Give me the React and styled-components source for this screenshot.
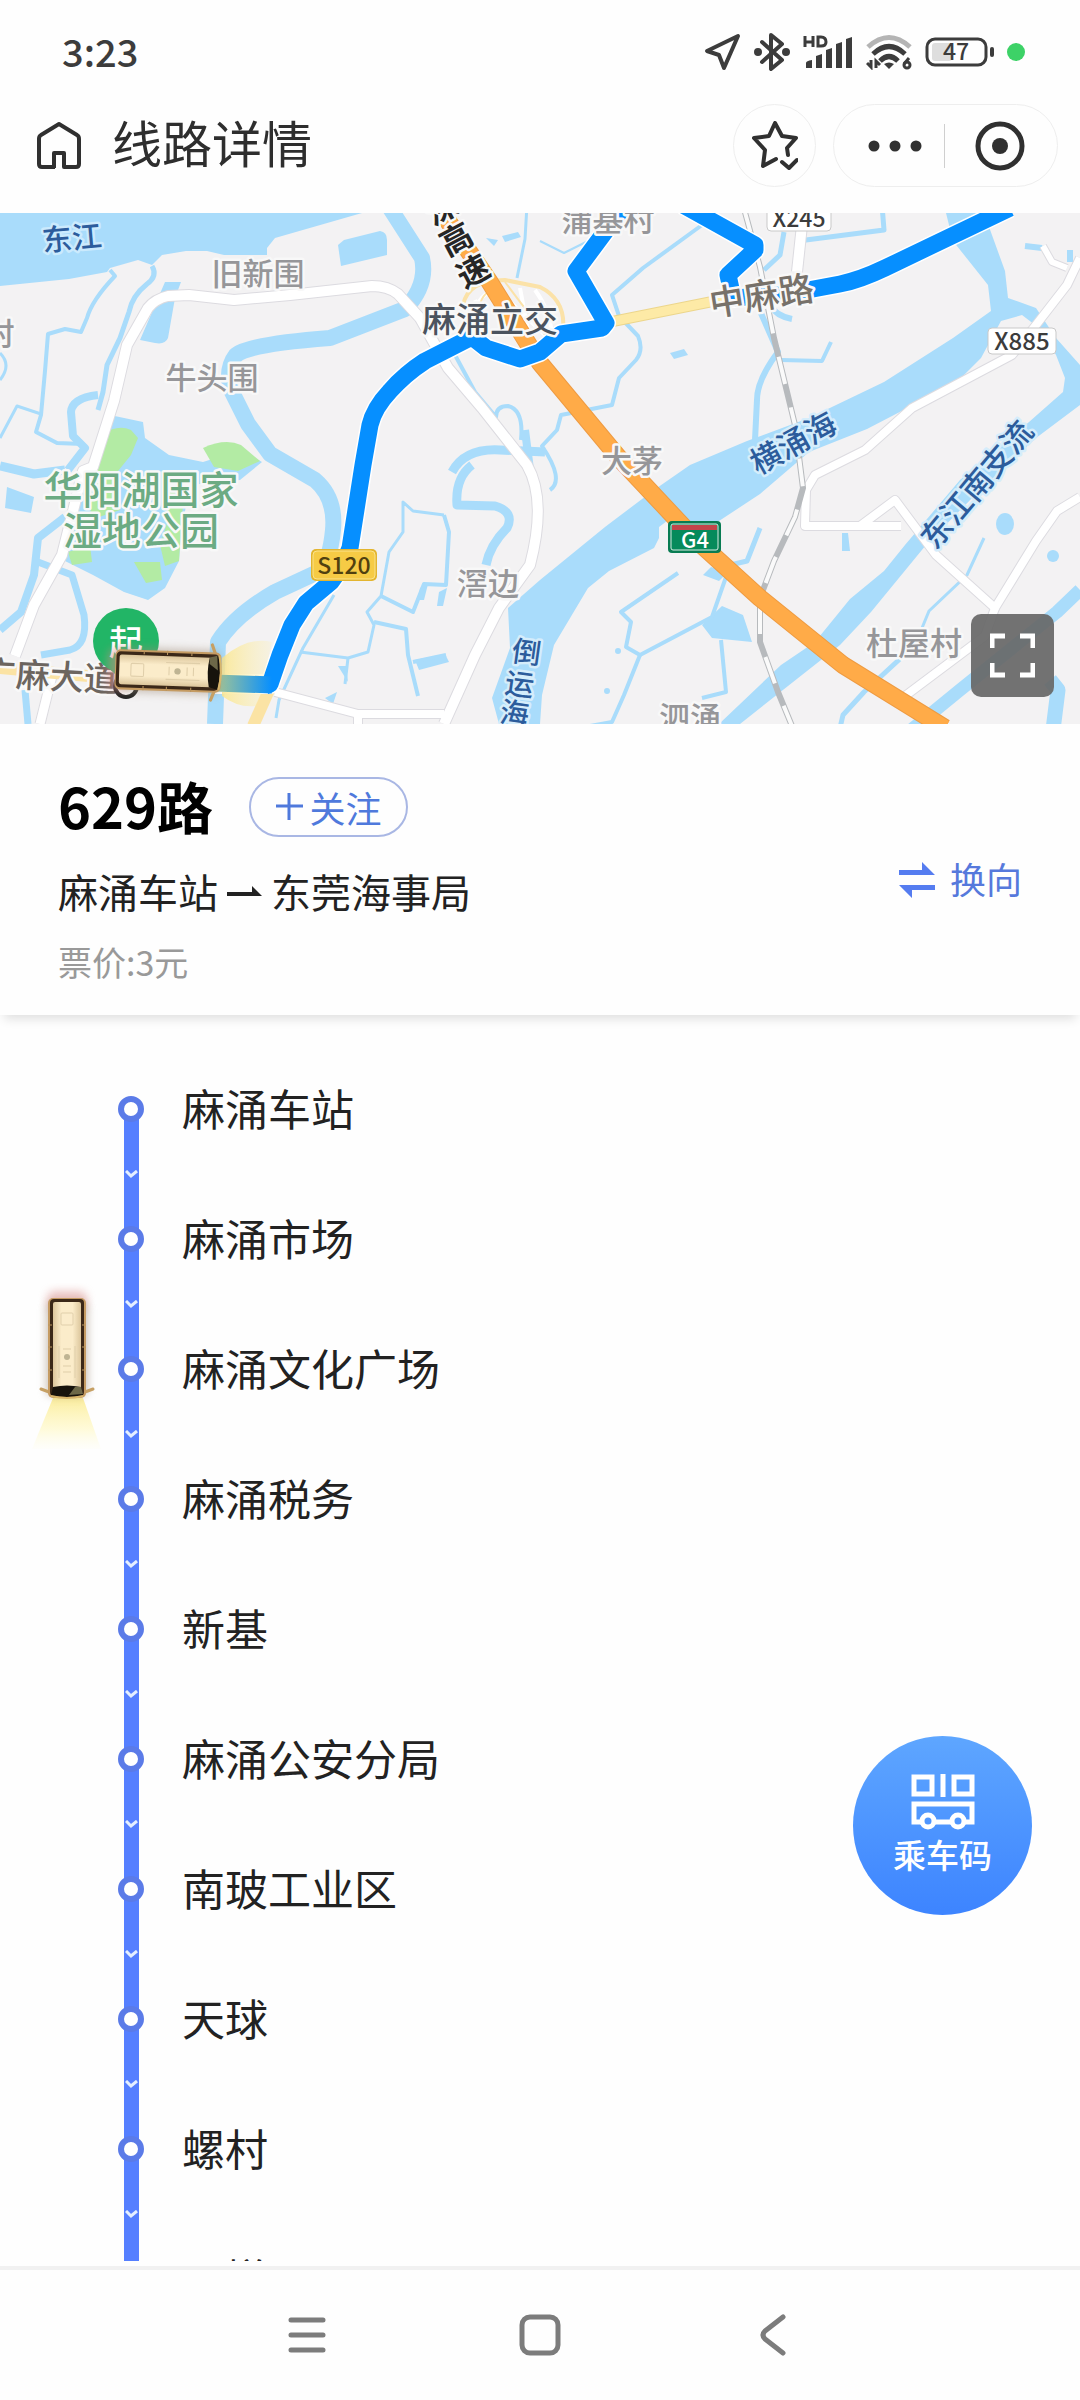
import React, { useState } from "react";
import styled, { createGlobalStyle } from "styled-components";

const GlobalStyle = createGlobalStyle`
  * { box-sizing: border-box; }
  body {
    margin: 0;
    background: #fefefe;
    color: #222;
    font-family: "Noto Sans CJK SC", "Noto Sans", sans-serif;
  }
  button { font-family: inherit; padding: 0; border: 0; background: none; color: inherit; cursor: pointer; }
  svg { display: block; }
`;

const Page = styled.div`
  display: flex;
  flex-direction: column;
  height: 100vh;
  overflow: hidden;
`;

const StatusBar = styled.div`
  display: flex;
  align-items: center;
  justify-content: space-between;
  flex: none;
  height: 104px;
  padding: 0 55px 0 62px;
`;

const Clock = styled.time`
  padding-bottom: 2px;
  font-size: 38px;
  line-height: 40px;
  font-weight: 500;
  color: #3c3c3c;
`;

const StatusIcons = styled.div`
  display: flex;
  align-items: center;
  gap: 13px;
`;

const Header = styled.header`
  display: flex;
  align-items: center;
  flex: none;
  padding: 0 22px 26px 32px;
`;

const HomeButton = styled.button`
  width: 54px;
  height: 54px;
`;

const Title = styled.h1`
  flex: 1;
  margin: 0 0 0 26px;
  padding-bottom: 10px;
  font-size: 50px;
  line-height: 60px;
  font-weight: 400;
  color: #2e2e2e;
`;

const RoundButton = styled.button`
  display: grid;
  place-items: center;
  width: 83px;
  height: 83px;
  margin-right: 17px;
  border: 1px solid #eee;
  border-radius: 50%;
`;

const Capsule = styled.div`
  display: flex;
  align-items: center;
  justify-content: space-between;
  width: 225px;
  height: 83px;
  padding: 0 32px 0 34px;
  border: 1px solid #eee;
  border-radius: 42px;
`;

const CapsuleButton = styled.button`
  display: grid;
  place-items: center;
  height: 100%;
`;

const CapsuleDivider = styled.span`
  width: 1px;
  height: 44px;
  margin-right: 8px;
  background: #cfcfcf;
`;

const MapPanel = styled.section`
  position: relative;
  flex: none;
  height: 511px;
  background: #f3f2f3;
`;

const MapCanvas = styled.svg`
  width: 100%;
  height: 100%;
`;

const MapText = styled.text`
  font-family: "Noto Sans CJK SC", "Noto Sans", sans-serif;
  font-size: ${(p) => p.$size || 31}px;
  font-weight: ${(p) => p.$weight || 500};
  fill: ${(p) => p.$color || "#969699"};
  stroke: ${(p) => p.$halo || "#f8f8f8"};
  stroke-width: ${(p) => (p.$halo === "none" ? 0 : 5)}px;
  stroke-linejoin: round;
  paint-order: stroke;
  text-anchor: middle;
  dominant-baseline: ${(p) => (p.$central ? "central" : "auto")};
`;

const ExpandButton = styled.button`
  position: absolute;
  right: 26px;
  bottom: 27px;
  display: grid;
  place-items: center;
  width: 83px;
  height: 83px;
  border-radius: 10px;
  background: rgba(103, 103, 103, 0.92);
`;

const RouteCard = styled.section`
  display: flex;
  align-items: center;
  justify-content: space-between;
  flex: none;
  height: 291px;
  padding: 50px 58px 30px;
  background: #fefefe;
  box-shadow: 0 8px 10px -4px rgba(0, 0, 0, 0.12);
`;

const RouteInfo = styled.div`
  display: flex;
  flex-direction: column;
`;

const RouteHead = styled.div`
  display: flex;
  align-items: center;
  gap: 36px;
  height: 66px;
`;

const RouteName = styled.h2`
  margin: 0;
  padding-bottom: 4px;
  font-size: 56px;
  line-height: 62px;
  font-weight: 700;
  color: #000;
`;

const FollowButton = styled.button`
  display: flex;
  align-items: center;
  justify-content: center;
  gap: 7px;
  width: 159px;
  height: 60px;
  border: 2px solid #a9b7e4;
  border-radius: 30px;
  font-size: 36px;
  line-height: 40px;
  color: #4f79dc;
`;

const Direction = styled.p`
  display: flex;
  align-items: center;
  gap: 9px;
  margin: 21px 0 0;
  font-size: 40px;
  line-height: 60px;
  color: #222;
`;

const Fare = styled.p`
  margin: 17px 0 0;
  font-size: 34px;
  line-height: 48px;
  color: #999;
`;

const SwapButton = styled.button`
  display: flex;
  align-items: center;
  gap: 15px;
  font-size: 36px;
  line-height: 40px;
  color: #5679dc;
`;

const SwapLabel = styled.span`
  padding-bottom: 4px;
`;

const StopArea = styled.main`
  position: relative;
  flex: 1;
  min-height: 0;
  margin-bottom: 5px;
  overflow: hidden;
`;

const StopList = styled.ol`
  margin: 0;
  padding: 81px 0 0;
  list-style: none;
`;

const Stop = styled.li`
  display: grid;
  grid-template-columns: 26px 1fr;
  column-gap: 38px;
  height: 130px;
  padding-left: 118px;
`;

const Track = styled.div`
  display: flex;
  flex-direction: column;
  align-items: center;
`;

const Dot = styled.span`
  z-index: 1;
  flex: none;
  width: 26px;
  height: 26px;
  border: 6px solid #5b7be8;
  border-radius: 50%;
  background: #fff;
`;

const Segment = styled.span`
  display: grid;
  place-items: center;
  flex: none;
  width: 15px;
  height: 124px;
  margin: -10px 0;
  background: #557fff;
`;

const StopName = styled.span`
  height: 24px;
  font-size: 43px;
  line-height: 22px;
  color: #222;
`;

const BusMarker = styled.svg`
  position: absolute;
  top: 263px;
  left: 27px;
`;

const RideCodeButton = styled.button`
  position: fixed;
  right: 48px;
  bottom: 485px;
  display: flex;
  flex-direction: column;
  align-items: center;
  width: 179px;
  height: 179px;
  padding-top: 38px;
  border-radius: 50%;
  background: linear-gradient(#5ea6ff, #3d84ff);
  color: #fff;
  font-size: 33px;
  line-height: 48px;
  font-weight: 500;
`;

const NavBar = styled.nav`
  display: flex;
  align-items: center;
  justify-content: center;
  gap: 173px;
  flex: none;
  height: 134px;
  border-top: 4px solid #f1f1f1;
`;

const NavButton = styled.button`
  display: grid;
  place-items: center;
  width: 60px;
  height: 60px;
`;

const stops = [
  "麻涌车站",
  "麻涌市场",
  "麻涌文化广场",
  "麻涌税务",
  "新基",
  "麻涌公安分局",
  "南玻工业区",
  "天球",
  "螺村",
  "川槎",
];

/* Top view of the bus, front pointing down, body centred on 0,0. */
function Bus({ beam }) {
  return (
    <g>
      {beam && <path d="M-14 50 L-35 101 L34 101 L16 50 Z" fill="url(#beam)" />}
      <rect x="-20" y="-57" width="40" height="20" rx="8" fill="#d98a86" opacity="0.5" filter="url(#soft)" />
      <rect x="-21" y="-46" width="42" height="94" rx="6" fill="#9d8a76" opacity="0.5" filter="url(#soft)" />
      <path d="M-18 44 L-26 41 M18 44 L26 41" stroke="#c6a064" strokeWidth="3" strokeLinecap="round" />
      <rect x="-19" y="-50" width="38" height="100" rx="5" fill="#c59b62" />
      <rect x="-17" y="-49" width="34" height="97" rx="4" fill="#3b2818" />
      <rect x="-14" y="-46" width="28" height="88" rx="2" fill="url(#roof)" />
      <path d="M-19 -23 H-15 M-19 -1 H-15 M-19 22 H-15 M15 -23 H19 M15 -1 H19 M15 22 H19" stroke="#b8945f" strokeWidth="1" />
      <path d="M-14 39 Q0 36 14 39 L16 47 Q0 51 -16 47 Z" fill="#17130c" />
      <path d="M2 47 L8 39 L14 39 L16 46 Z" fill="#6d6848" />
      <path d="M-16 48 Q0 52 16 48" stroke="#d8b66c" strokeWidth="2" fill="none" />
      <rect x="-6" y="-35" width="12" height="12" rx="1" fill="#fbeccb" stroke="#e0cfab" />
      <path d="M-8 -2 V30 M8 -2 V30 M-4 1 H4 M-4 18 H4 M-4 24 H4" stroke="#dfcea9" fill="none" />
      <circle cx="0" cy="9" r="3" fill="#bfb493" />
    </g>
  );
}

function BusDefs() {
  return (
    <defs>
      <linearGradient id="beam" x1="0" y1="0" x2="0" y2="1">
        <stop offset="0" stopColor="#fbec98" stopOpacity="0.95" />
        <stop offset="0.6" stopColor="#fff8bf" stopOpacity="0.6" />
        <stop offset="1" stopColor="#fffbdc" stopOpacity="0.1" />
      </linearGradient>
      <linearGradient id="roof">
        <stop offset="0" stopColor="#dcc69c" />
        <stop offset="0.3" stopColor="#fbecca" />
        <stop offset="0.7" stopColor="#fbecca" />
        <stop offset="1" stopColor="#dcc69c" />
      </linearGradient>
      <linearGradient id="glow" x1="220" x2="272" y1="0" y2="0" gradientUnits="userSpaceOnUse">
        <stop offset="0" stopColor="#fbe78f" stopOpacity="0.9" />
        <stop offset="1" stopColor="#fdf0b4" stopOpacity="0.25" />
      </linearGradient>
      <linearGradient id="lit" x1="220" x2="272" y1="0" y2="0" gradientUnits="userSpaceOnUse">
        <stop offset="0" stopColor="#9bc29a" />
        <stop offset="1" stopColor="#068fff" />
      </linearGradient>
      <filter id="soft" x="-40%" y="-40%" width="180%" height="180%">
        <feGaussianBlur stdDeviation="4" />
      </filter>
    </defs>
  );
}

const WATER = "#a9dcfb";
const BLUE = "#2c5c9c";

const roads = [
  ["M15 656 L34 605 L62 555 L83 471 L93 467 L114 401 L127 345 L148 308 Q155 299 168 296 L189 295 L234 300 L290 295 L372 286 Q388 286 398 294 L420 318 L448 368 L482 408 L527 465 Q547 500 530 565 L499 608 L475 655 L444 724", 10],
  ["M275 692 L358 714 L444 714 M358 714 V724", 8],
  ["M52 676 L40 724", 9],
  ["M1080 258 L1067 285 L1036 325 L1012 355 L912 408 L865 450 L815 475 L806 490 L805 526 L860 526 L895 500 L936 555 L995 608 L1036 541 L1057 511 L1080 497", 8],
  ["M860 526 L901 526", 8],
  ["M995 608 L985 636 L905 696", 8],
  ["M802 225 L797 272", 10],
  ["M1043 246 L1052 262 L1067 268", 6],
];

const streams = [
  ["M152 266 Q158 276 147 284 Q132 296 129 312 L120 338 L107 365 L103 392 L98 410", 5],
  ["M110 270 L115 276 Q92 300 87 318 L81 332 L65 329 L48 334 L45 371 L41 415 L36 432 L57 443 L83 444", 4],
  ["M388 205 L422 258 Q428 285 405 309 L330 338 Q250 344 236 355 Q226 368 230 388 L248 424 L270 454 L315 480 Q336 498 333 530 Q330 562 318 572 L275 592 Q235 615 218 642 L215 724", 16],
  ["M98 395 Q72 398 71 412 L73 436 L85 448 L68 470", 8],
  ["M0 438 L17 406 L41 414", 3],
  ["M0 466 L34 474 L65 470", 9],
  ["M65 517 L38 538 L34 575 L21 612 L0 630", 8],
  ["M38 562 L72 575 L84 615 Q88 645 70 650 L41 655", 7],
  ["M25 690 L28 724", 7],
  ["M0 353 Q12 365 0 380", 3],
  ["M455 355 L475 392 L496 417 Q496 406 508 406 Q524 410 521 440", 4],
  ["M545 452 L500 450 Q465 448 452 472", 9],
  ["M525 430 L530 470", 8],
  ["M472 465 Q455 478 457 505 L495 506 Q515 512 507 528 Q490 545 486 565", 9],
  ["M444 515 L413 511 L403 502 L403 532 L389 552 L381 596 L367 612 L374 625 L368 652 L348 658 L300 652", 3],
  ["M381 596 L413 612 L424 584 L446 585 L449 532 L444 515", 4],
  ["M374 622 L406 629 L408 655 L418 696 M413 662 L446 655", 4],
  ["M348 658 L345 684 M334 595 L303 648 L279 700 L276 718", 3],
  ["M527 205 L525 239 L517 278", 3],
  ["M540 241 L564 253 L590 240", 2],
  ["M702 225 L643 268 L612 295 L619 316 L638 336 Q644 350 636 360 L619 378 L612 405 L561 415 L557 430 L542 446 Q565 480 550 490", 4],
  ["M784 232 L780 255 L764 270 M798 241 L884 230 L882 205", 5],
  ["M760 311 L778 352 Q757 380 757 400 L755 440 M770 305 Q776 316 792 319", 6],
  ["M781 360 L822 361 L831 342", 4],
  ["M678 573 L621 612 L631 622 L626 647 L640 655 L712 617 L726 577", 4],
  ["M640 655 L624 695 L612 722 L590 726", 4],
  ["M760 528 L747 561 L726 566", 5],
  ["M721 640 L726 692 L702 698", 4],
  ["M984 538 L967 575 L929 611 L922 628", 3],
  ["M915 645 L864 692 L843 715 L840 728", 5],
  ["M905 735 L960 690 L1057 612 L1080 590", 13],
  ["M1050 680 L1058 690 L1053 730", 15],
  ["M1025 246 L1042 248 M1070 250 V262", 6],
];

function RouteMap() {
  return (
    <MapCanvas viewBox="0 213 1080 511" preserveAspectRatio="xMidYMid slice" role="img" aria-label="629路线路地图">
      <BusDefs />
      <rect x="0" y="213" width="1080" height="511" fill="#f3f2f3" />
      <g fill={WATER}>
        <path d="M0 213 H362 L275 238 L267 248 V255 H224 L207 251 H186 L162 255 L152 265 L138 260 L110 268 L107 272 L69 279 L0 286 Z" />
        <path d="M344 240 L380 231 Q387 232 387 240 V255 L341 266 L338 245 Z" />
        <path d="M165 282 L181 282 L175 298 L168 338 Q165 345 155 343 L140 340 Z" />
        <path d="M946 213 L953 241 L988 285 L991 311 L953 338 L884 382 L809 418 L747 441 L690 465 L654 490 L605 527 L540 580 L508 608 L510 648 L492 698 L499 724 H540 L542 695 L554 645 L588 588 L609 571 L654 548 L659 538 V527 L667 521 H719 L760 494 L809 452 L867 429 L919 402 L957 382 L981 358 L1001 321 L1022 315 L1039 328 L1056 355 L1065 378 L1063 392 L1029 422 L960 480 L905 545 L884 571 L850 599 L815 642 L781 665 L719 724 H740 L840 645 L871 612 L926 545 L975 495 L1036 438 L1080 405 V365 L1056 338 L1036 308 L1008 298 L1005 271 L984 213 Z" />
        <path d="M110 415 L143 422 L145 438 L169 455 L203 462 L241 450 L262 462 L240 480 L190 485 L181 532 L179 561 L165 588 L148 600 L124 592 L93 575 L65 561 L85 480 Z" />
        <path d="M7 487 L34 497 L31 513 L5 508 Z M486 238 l12 2 l-4 6 z M502 236 l16 -4 l3 5 l-16 5 z" />
        <path d="M722 606 L743 615 L752 642 L712 638 L702 625 Z M703 575 l8 -8 l16 6 l-8 8 z M670 353 l14 -4 l4 6 l-14 4 z M842 533 h6 l2 18 h-8 z" />
        <path d="M420 588 l8 -4 l-4 16 h-6 z M439 592 l8 -4 l-4 18 h-6 z M415 660 l30 -6 l4 8 l-30 8 z M325 698 l12 -6 l-4 12 z M338 666 h8 l2 16 z" />
        <ellipse cx="1005" cy="524" rx="9" ry="11" />
        <circle cx="1053" cy="556" r="6" />
        <circle cx="618" cy="651" r="3" />
        <circle cx="607" cy="691" r="3" />
      </g>
      <g fill="#b3eba4">
        <path d="M103 434 Q118 424 131 430 L138 438 L131 455 L114 476 L120 510 L90 520 L93 471 Z" />
        <path d="M203 448 Q225 438 241 445 L260 461 L238 471 L214 467 Z" />
        <path d="M165 480 L185 478 L181 530 L179 561 L165 566 L160 545 L168 520 Z" />
        <path d="M68 552 L90 545 L92 562 L72 565 Z M134 562 L160 562 L162 580 L146 583 Z" />
      </g>
      <g fill="none" stroke={WATER} strokeLinejoin="round">
        {streams.map(([d, w]) => (
          <path key={d} d={d} strokeWidth={w} />
        ))}
      </g>
      <g fill="none" strokeLinejoin="round">
        {roads.map(([d, w]) => (
          <path key={d} d={d} stroke="#dcdbe0" strokeWidth={w + 2} />
        ))}
        {roads.map(([d, w]) => (
          <path key={d} d={d} stroke="#fff" strokeWidth={w} />
        ))}
        <g strokeWidth="4">
          <path d="M463 305 Q468 280 505 280 L540 287 Q566 300 563 330" stroke="#fbe2a8" />
          <path d="M472 322 Q478 288 500 292 L550 340 M488 330 L475 300 M520 288 L528 330 M535 290 Q550 310 552 335" stroke="#fff" />
          <path d="M480 338 Q474 302 488 292 M505 282 L545 335" stroke="#fbe2a8" strokeWidth="2" />
        </g>
        <path d="M605 323 L735 297" stroke="#ecd68c" strokeWidth="11" />
        <path d="M605 323 L735 297" stroke="#fdeaa6" strokeWidth="9" />
        <path d="M0 668 L110 678" stroke="#fbe3a4" strokeWidth="12" />
        <path d="M253 726 L269 690" stroke="#fbe3a4" strokeWidth="12" />
        <path d="M743 205 L760 267 L774 338 L795 425 L803 488 L795 517 L774 561 L760 598 V642 L778 692 L792 726" stroke="#b7babd" strokeWidth="6" />
        <path d="M743 205 L760 267 L774 338 L795 425 L803 488 L795 517 L774 561 L760 598 V642 L778 692 L792 726" stroke="#fafafa" strokeWidth="4" strokeDasharray="28 24" />
        <path d="M437 205 L489 281 L540 363 L619 458 L695 539 L760 598 L843 665 L945 728" stroke="#ee9b42" strokeWidth="18" />
        <path d="M437 205 L489 281 L540 363 L619 458 L695 539 L760 598 L843 665 L945 728" stroke="#ffab48" strokeWidth="16" />
        <g>
          <path d="M215 684 H270 L280 655 L292 625 L306 603 L331 582 L343 565 L350 548 L363 465 L370 425 Q374 408 390 391 Q405 374 425 361 L472 337 L486 348 L520 359 L540 352 L561 334 L602 328 L606 323 L576 271 L625 205" stroke="#fff" strokeWidth="20" />
          <path d="M683 205 L755 245 V250 L728 275 L733 298 L781 295 L840 284 Q860 280 885 268 L1010 208" stroke="#fff" strokeWidth="20" />
          <path d="M265 686 L270 684 L280 655 L292 625 L306 603 L331 582 L343 565 L350 548 L363 465 L370 425 Q374 408 390 391 Q405 374 425 361 L472 337 L486 348 L520 359 L540 352 L561 334 L602 328 L606 323 L576 271 L625 205" stroke="#068fff" strokeWidth="17" />
          <path d="M683 205 L755 245 V250 L728 275 L733 298 L781 295 L840 284 Q860 280 885 268 L1010 208" stroke="#068fff" strokeWidth="17" />
          <path d="M222 658 Q248 636 272 642 L264 676 H222 Z M222 692 H262 L256 706 Q238 708 222 696 Z" fill="url(#glow)" />
          <path d="M215 683 L272 685" stroke="url(#lit)" strokeWidth="17" />
        </g>
      </g>

      <MapText x="72" y="249" transform="rotate(-5 72 239)" $color={BLUE} $halo="#cbeafd" $size={30}>东江</MapText>
      <MapText x="258" y="285">旧新围</MapText>
      <MapText x="212" y="389">牛头围</MapText>
      <MapText x="-1" y="345">村</MapText>
      <MapText x="141" y="504" $size={39} $color="#6cab83">华阳湖国家</MapText>
      <MapText x="141" y="545" $size={39} $color="#6cab83">湿地公园</MapText>
      <MapText x="608" y="231">蒲基村</MapText>
      <MapText x="632" y="472">大茅</MapText>
      <MapText x="488" y="595">滘边</MapText>
      <MapText x="914" y="655" $size={32}>杜屋村</MapText>
      <MapText x="690" y="729">泗涌</MapText>
      <MapText x="490" y="332" $size={34} $color="#4b535e">麻涌立交</MapText>
      <MapText x="761" y="293" transform="rotate(-9 761 293)" $central $size={35} $color="#77716a">中麻路</MapText>
      <MapText x="792" y="441" transform="rotate(-29 792 441)" $central $color={BLUE} $halo="#d5edfb">横涌海</MapText>
      <MapText x="975" y="483" transform="rotate(-50 975 483)" $central $color={BLUE} $halo="#d5edfb">东江南支流</MapText>
      {[["倒", 527, 650], ["运", 520, 682], ["海", 515, 711]].map(([c, x, y]) => (
        <MapText key={c} x={x} y={y} transform={`rotate(8 ${x} ${y})`} $central $color={BLUE} $halo="#d5edfb" $size={29}>{c}</MapText>
      ))}
      {[["深", 441, 206], ["高", 455, 237], ["速", 472, 269]].map(([c, x, y]) => (
        <MapText key={c} x={x} y={y} transform={`rotate(-28 ${x} ${y})`} $central $color="#262626" $weight={700} $size={32}>{c}</MapText>
      ))}
      <MapText x="50" y="674" transform="rotate(3 50 674)" $central $size={34} $color="#6c655f">广麻大道</MapText>

      <rect x="767" y="200" width="64" height="31" rx="4" fill="#fff" stroke="#c9c9c9" />
      <MapText x="799" y="227" $size={23} $color="#3c3c3c" $halo="none">X245</MapText>
      <rect x="988" y="328" width="68" height="26" rx="4" fill="#fff" stroke="#c9c9c9" />
      <MapText x="1022" y="350" $size={24} $color="#3c3c3c" $halo="none">X885</MapText>
      <rect x="311" y="549" width="66" height="32" rx="5" fill="#e3b52f" />
      <rect x="313" y="551" width="62" height="28" rx="4" fill="#f6cb45" stroke="#fbe38c" />
      <MapText x="344" y="574" $size={23} $color="#50400f" $halo="none">S120</MapText>
      <rect x="668" y="521" width="53" height="32" rx="4" fill="#087c52" />
      <rect x="671" y="524" width="47" height="26" rx="2" fill="#058a5b" stroke="#d7ede4" />
      <rect x="672" y="525" width="45" height="5" fill="#c2454a" />
      <MapText x="695" y="548" $size={22} $color="#fff" $halo="none">G4</MapText>

      <circle cx="126" cy="686" r="11" fill="#fff" stroke="#222" strokeWidth="4" />
      <circle cx="126" cy="641" r="33" fill="#22b566" />
      <path d="M104 664 L126 684 L148 664 Z" fill="#22b566" />
      <MapText x="126" y="640" $central $size={34} $color="#fff" $halo="none">起</MapText>
      <g transform="translate(168 671) rotate(-88) scale(1.06)">
        <Bus />
      </g>
    </MapCanvas>
  );
}

function StatusGlyphs() {
  const ink = "#3c3c3c";
  return (
    <StatusIcons>
      <svg width="37" height="38" viewBox="0 0 37 38" fill="none" stroke={ink} strokeWidth="4" strokeLinejoin="round">
        <path d="M34 3 L20 35 L15 22 L3 18 Z" />
      </svg>
      <svg width="36" height="40" viewBox="0 0 36 40" fill="none" stroke={ink} strokeWidth="4" strokeLinejoin="round" strokeLinecap="round">
        <path d="M8 10 L28 28 L17 37 V3 L28 12 L8 30" />
        <circle cx="4" cy="20" r="2" fill={ink} />
        <circle cx="32" cy="20" r="2" fill={ink} />
      </svg>
      <svg width="50" height="34" viewBox="0 0 50 34" fill={ink}>
        <path d="M2 1 V12 M10 1 V12 M2 7 H10 M15 2 V11 H18 Q23 11 23 7 Q23 2 18 2 Z" fill="none" stroke={ink} strokeWidth="3" />
        <path d="M3 28 Q3 26 9 25 V33 H3 Z M13 21 L19 19 V33 H13 Z M23 15 L29 13 V33 H23 Z M33 9 L39 7 V33 H33 Z M43 4 L49 2 V33 H43 Z" />
      </svg>
      <svg width="46" height="36" viewBox="0 0 46 36" fill="none" stroke={ink} strokeWidth="5">
        <path d="M2 13 Q23 -6 44 13" stroke="#b4b4b4" />
        <path d="M7 20 Q23 5 39 20" />
        <path d="M14 27 Q23 18 32 27" />
        <path d="M18 30 Q23 27 28 30 L23 35 Z" fill={ink} stroke="none" />
        <path d="M5 26 V33 L1 29 M10 34 V27 L14 31" strokeWidth="3" />
        <path d="M43 24 L38 30" strokeWidth="3" />
        <circle cx="41" cy="31" r="3" strokeWidth="3" />
      </svg>
      <svg width="69" height="30" viewBox="0 0 69 30">
        <rect x="7" y="6" width="20" height="18" rx="3" fill="#dedede" />
        <rect x="2" y="2" width="59" height="26" rx="8" fill="none" stroke={ink} strokeWidth="3" />
        <rect x="65" y="10" width="4" height="10" rx="2" fill={ink} />
        <text x="31" y="23" textAnchor="middle" fontSize="23" fontWeight="500" fontFamily="Noto Sans CJK SC, sans-serif" fill={ink}>47</text>
      </svg>
      <svg width="18" height="18" viewBox="0 0 18 18">
        <circle cx="9" cy="9" r="9" fill="#3dd267" />
      </svg>
    </StatusIcons>
  );
}

export default function App() {
  const [followed, setFollowed] = useState(false);
  return (
    <Page>
      <GlobalStyle />
      <StatusBar>
        <Clock>3:23</Clock>
        <StatusGlyphs />
      </StatusBar>
      <Header>
        <HomeButton aria-label="首页">
          <svg width="54" height="54" viewBox="0 0 54 54" fill="none" stroke="#303030" strokeWidth="4" strokeLinejoin="round">
            <path d="M23 48 H10 Q7 48 7 45 V20 Q7 17 9 16 L27 5 L45 16 Q47 17 47 20 V45 Q47 48 44 48 H32 V34 H22 V49" />
          </svg>
        </HomeButton>
        <Title>线路详情</Title>
        <RoundButton aria-label="收藏">
          <svg width="46" height="50" viewBox="0 0 46 50" fill="none" stroke="#303030" strokeWidth="4" strokeLinejoin="round" strokeLinecap="round">
            <path d="M24 38 L11 45 L13 29 L2 17 L17 15 L23 2 L30 15 L44 17 L35 27 L36 34" />
            <path d="M30 41 L37 47 L45 39" />
          </svg>
        </RoundButton>
        <Capsule>
          <CapsuleButton aria-label="更多">
            <svg width="54" height="12" viewBox="0 0 54 12" fill="#303030">
              <circle cx="6" cy="6" r="5.5" />
              <circle cx="27" cy="6" r="5.5" />
              <circle cx="48" cy="6" r="5.5" />
            </svg>
          </CapsuleButton>
          <CapsuleDivider />
          <CapsuleButton aria-label="关闭">
            <svg width="50" height="50" viewBox="0 0 50 50">
              <circle cx="25" cy="25" r="22" fill="none" stroke="#303030" strokeWidth="5" />
              <circle cx="25" cy="25" r="8" fill="#303030" />
            </svg>
          </CapsuleButton>
        </Capsule>
      </Header>

      <MapPanel>
        <RouteMap />
        <ExpandButton aria-label="全屏">
          <svg width="45" height="45" viewBox="0 0 45 45" fill="none" stroke="#fff" strokeWidth="5">
            <path d="M2 15 V3 H15 M30 3 H43 V15 M43 30 V42 H30 M15 42 H2 V30" />
          </svg>
        </ExpandButton>
      </MapPanel>

      <RouteCard>
        <RouteInfo>
          <RouteHead>
            <RouteName>629路</RouteName>
            <FollowButton aria-pressed={followed} onClick={() => setFollowed(!followed)}>
              <svg width="27" height="27" viewBox="0 0 27 27" stroke="#4f79dc" strokeWidth="3">
                <path d="M0 13 H27 M13 0 V27" />
              </svg>
              关注
            </FollowButton>
          </RouteHead>
          <Direction>
            麻涌车站
            <svg width="35" height="10" viewBox="0 0 35 10" fill="#222">
              <path d="M0 6 H25 V0 L35 10 H0 Z" />
            </svg>
            东莞海事局
          </Direction>
          <Fare>票价:3元</Fare>
        </RouteInfo>
        <SwapButton>
          <svg width="36" height="36" viewBox="0 0 36 36" fill="#557cf0">
            <path d="M0 8 H23 V0 L36 13 H0 Z M36 28 H13 V36 L0 23 H36 Z" />
          </svg>
          <SwapLabel>换向</SwapLabel>
        </SwapButton>
      </RouteCard>

      <StopArea>
        <StopList>
          {stops.map((name) => (
            <Stop key={name}>
              <Track>
                <Dot />
                <Segment>
                  <svg width="13" height="9" viewBox="0 0 13 9" fill="none" stroke="#e4efff" strokeWidth="3">
                    <path d="M1 1 L6 6 L12 1" />
                  </svg>
                </Segment>
              </Track>
              <StopName>{name}</StopName>
            </Stop>
          ))}
        </StopList>
        <BusMarker width="80" height="180" viewBox="-40 -70 80 180" aria-hidden="true">
          <Bus beam />
        </BusMarker>
      </StopArea>

      <RideCodeButton>
        <svg width="64" height="56" viewBox="0 0 64 56" fill="none" stroke="#fff" strokeWidth="5">
          <path d="M3 3 H21 V20 H3 Z M43 3 H61 V20 H43 Z M32 0 V23" />
          <path d="M10 48 H3 V30 H61 V48 H54 M24 48 H40" />
          <circle cx="17" cy="47" r="6" />
          <circle cx="47" cy="47" r="6" />
        </svg>
        乘车码
      </RideCodeButton>

      <NavBar>
        <NavButton aria-label="最近任务">
          <svg width="38" height="38" viewBox="0 0 38 38" stroke="#7c7c7c" strokeWidth="5" strokeLinecap="round">
            <path d="M3 4 H35 M3 19 H35 M3 34 H35" />
          </svg>
        </NavButton>
        <NavButton aria-label="主屏幕">
          <svg width="42" height="42" viewBox="0 0 42 42" fill="none" stroke="#7c7c7c" strokeWidth="5">
            <rect x="3" y="3" width="36" height="36" rx="8" />
          </svg>
        </NavButton>
        <NavButton aria-label="返回">
          <svg width="26" height="42" viewBox="0 0 26 42" fill="none" stroke="#7c7c7c" strokeWidth="5" strokeLinecap="round" strokeLinejoin="round">
            <path d="M23 3 L5 17 Q1 21 5 25 L23 39" />
          </svg>
        </NavButton>
      </NavBar>
    </Page>
  );
}
